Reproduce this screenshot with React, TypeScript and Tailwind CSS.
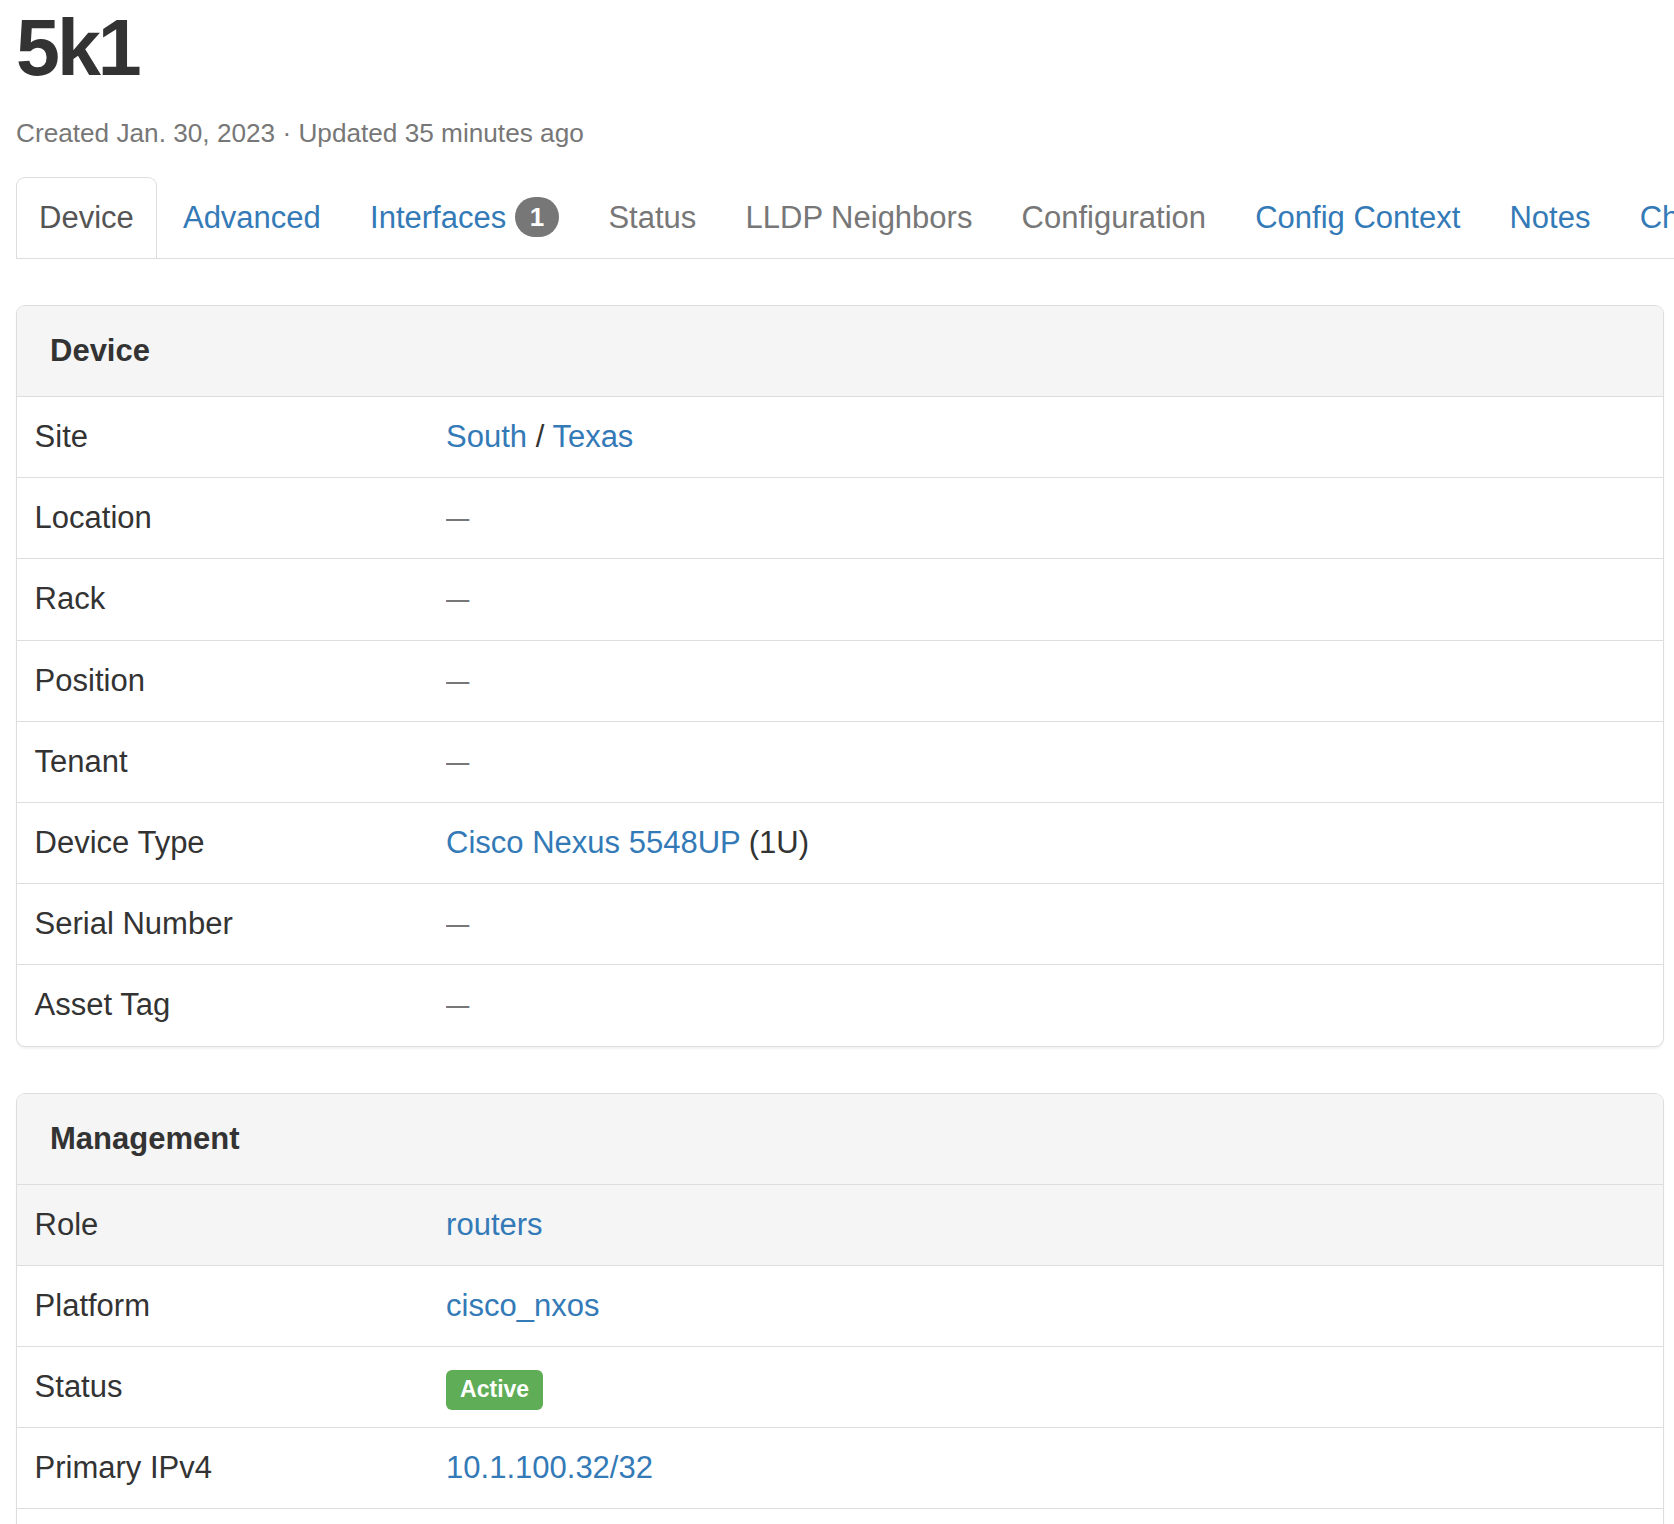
import React from "react";

type Row = {
  label: string;
  value: React.ReactNode;
  hover?: boolean;
};

const tabs = [
  { name: "Device", active: true },
  { name: "Advanced", link: true },
  { name: "Interfaces", link: true, badge: "1" },
  { name: "Status" },
  { name: "LLDP Neighbors" },
  { name: "Configuration" },
  { name: "Config Context", link: true },
  { name: "Notes", link: true },
  { name: "Change Log", link: true },
];

function Dash() {
  return (
    <span className="inline-block origin-left scale-x-75 text-[#777]">—</span>
  );
}

function A({ children }: { children: React.ReactNode }) {
  return <a className="text-[#337ab7]">{children}</a>;
}

const deviceRows: Row[] = [
  {
    label: "Site",
    value: (
      <>
        <A>South</A> / <A>Texas</A>
      </>
    ),
  },
  { label: "Location", value: <Dash /> },
  { label: "Rack", value: <Dash /> },
  { label: "Position", value: <Dash /> },
  { label: "Tenant", value: <Dash /> },
  {
    label: "Device Type",
    value: (
      <>
        <A>Cisco Nexus 5548UP</A> (1U)
      </>
    ),
  },
  { label: "Serial Number", value: <Dash /> },
  { label: "Asset Tag", value: <Dash /> },
];

const managementRows: Row[] = [
  { label: "Role", value: <A>routers</A>, hover: true },
  { label: "Platform", value: <A>cisco_nxos</A> },
  {
    label: "Status",
    value: (
      <span className="relative top-[1px] inline-flex h-[40px] items-center rounded-[6px] bg-[#5fad56] px-[14px] align-middle text-[23px] font-bold leading-none text-white">
        Active
      </span>
    ),
  },
  { label: "Primary IPv4", value: <A>10.1.100.32/32</A> },
  { label: "Primary IPv6", value: <Dash /> },
];

function Panel({ title, rows }: { title: string; rows: Row[] }) {
  return (
    <div className="overflow-hidden rounded-[9px] border border-[#ddd] bg-white shadow-[0_2px_2px_rgba(0,0,0,0.05)]">
      <div className="border-b border-[#ddd] bg-[#f5f5f5] px-[33px] py-[23px] text-[31px] font-bold leading-[44px]">
        {title}
      </div>
      {rows.map((r, i) => (
        <div
          key={r.label}
          className={`grid grid-cols-[25%_1fr] ${i > 0 ? "border-t border-[#ddd]" : ""} ${r.hover ? "bg-[#f5f5f5]" : ""}`}
        >
          <div className="h-[80.2px] px-[17.6px] py-[18px] leading-[44px]">{r.label}</div>
          <div className="h-[80.2px] px-[17.6px] py-[18px] leading-[44px]">{r.value}</div>
        </div>
      ))}
    </div>
  );
}

export default function App() {
  return (
    <main className="min-h-screen overflow-hidden bg-white font-[Liberation_Sans,Arial,sans-serif] text-[31px] text-[#333]">
      <div className="pl-4">
        <div className="pr-[10px]">
          <h1 className="mt-[4px] text-[79px] font-bold leading-[87px] tracking-[-3px]">5k1</h1>
          <p className="mt-[27px] text-[26.2px] leading-[30px] text-[#777]">
            Created Jan. 30, 2023 · Updated 35 minutes ago
          </p>
        </div>

        <div className="mt-[29px] flex overflow-hidden whitespace-nowrap border-b border-[#ddd]">
          {tabs.map((t) => (
            <div
              key={t.name}
              className={`-mb-px mr-[3.2px] shrink-0 rounded-t-[9px] border px-[22px] py-[18px] leading-[44px] ${
                t.active
                  ? "border-[#ddd] border-b-white bg-white text-[#555]"
                  : "border-transparent"
              } ${t.link ? "text-[#337ab7]" : t.active ? "" : "text-[#777]"}`}
            >
              {t.name}
              {t.badge && (
                <>
                  {" "}
                  <span className="relative -top-[3px] inline-block rounded-[22px] bg-[#777] px-[15px] py-[7px] align-middle text-[26px] font-bold leading-none text-white">
                    {t.badge}
                  </span>
                </>
              )}
            </div>
          ))}
        </div>

        <div className="pr-[10px]">
          <div className="mt-[46px]">
            <Panel title="Device" rows={deviceRows} />
          </div>
          <div className="mt-[46px]">
            <Panel title="Management" rows={managementRows} />
          </div>
        </div>
      </div>
    </main>
  );
}
